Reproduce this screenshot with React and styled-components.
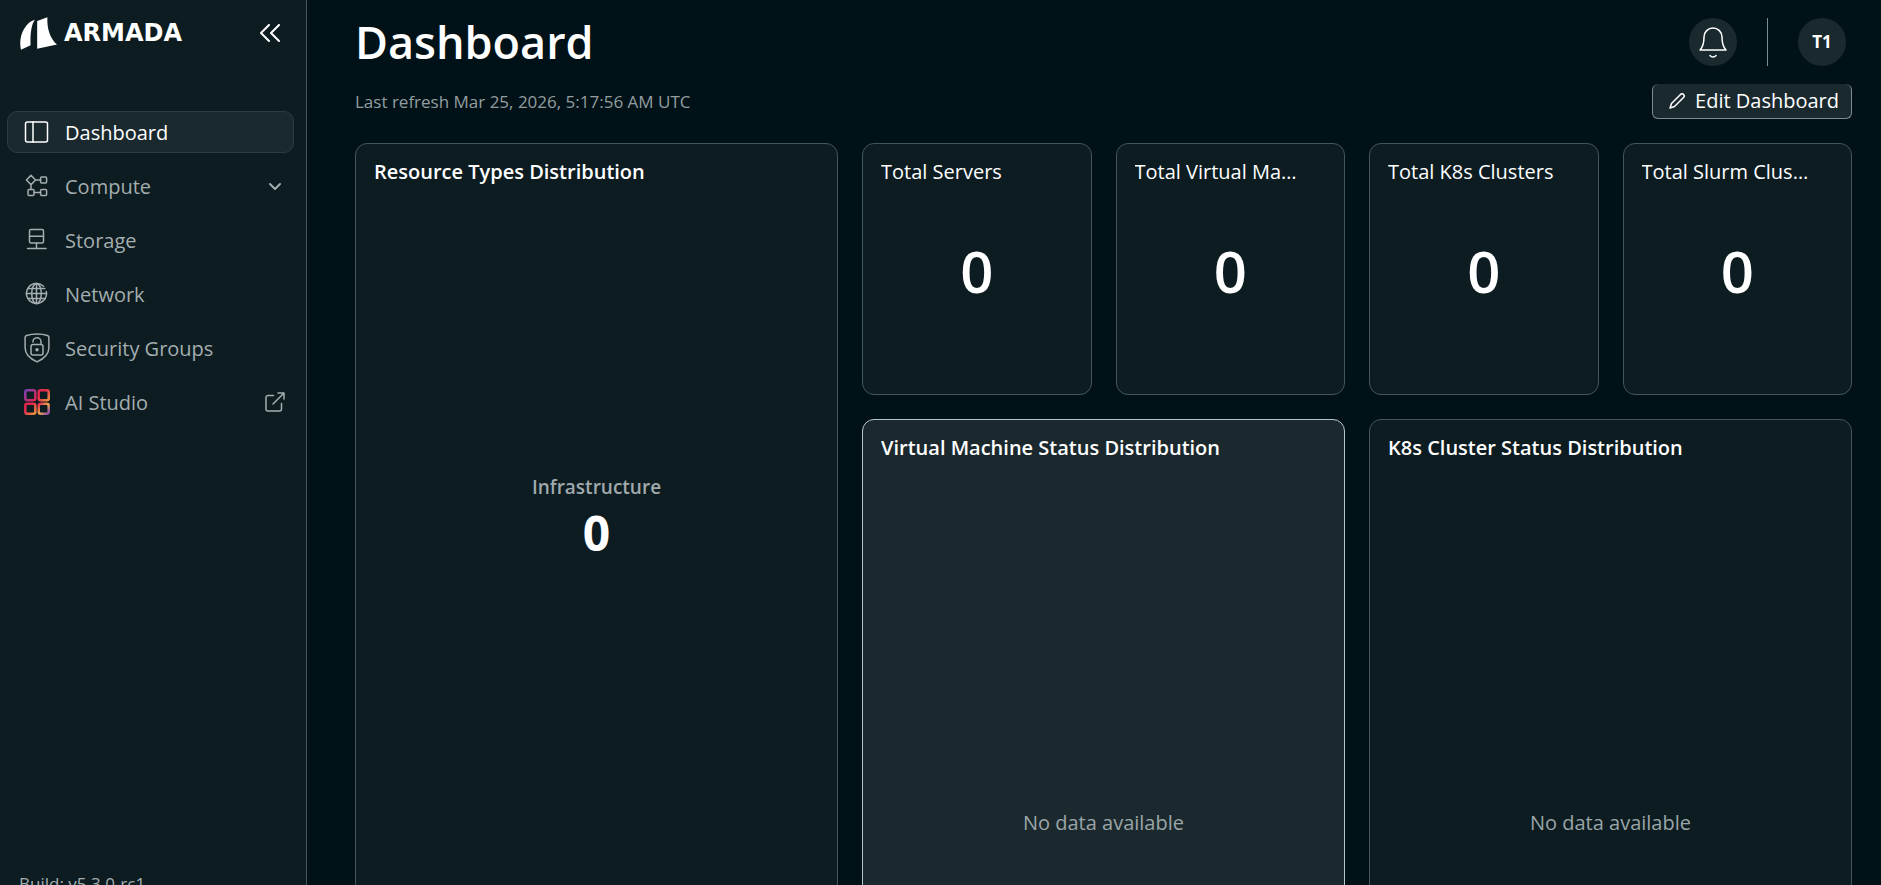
import styled, { createGlobalStyle, css } from 'styled-components';

const GlobalStyle = createGlobalStyle`
  * {
    box-sizing: border-box;
  }

  body {
    margin: 0;
    background-color: #001217;
    color: #ffffff;
    font-family: 'Open Sans', 'Noto Sans', sans-serif;
    font-size: 20px;
    line-height: 28px;
  }

  h1, h2, p, dl, dd, ul {
    margin: 0;
    padding: 0;
  }

  button {
    font: inherit;
    color: inherit;
    cursor: pointer;
  }
`;

const Layout = styled.div`
  display: grid;
  grid-template-columns: 307px minmax(0, 1fr);
  height: 100vh;
  overflow: hidden;
`;

// Sidebar
const Sidebar = styled.aside`
  display: flex;
  flex-direction: column;
  height: calc(100vh + 13px);
  padding: 16px 12px 0 7px;
  background-color: #0c1c21;
  border-right: 1px solid #43565b;
`;

const SidebarTop = styled.div`
  display: flex;
  align-items: center;
  justify-content: space-between;
  height: 34px;
  padding: 0 14px 0 13px;
  margin-bottom: 61px;
`;

const Brand = styled.a`
  display: flex;
  align-items: center;
  gap: 7px;
  color: #ffffff;
  text-decoration: none;
`;

const BrandName = styled.span`
  font-family: 'DejaVu Sans', sans-serif;
  font-size: 24px;
  font-weight: 700;
  line-height: 32px;
`;

const IconButton = styled.button`
  display: flex;
  padding: 0;
  border: 0;
  background: none;
`;

const NavList = styled.ul`
  display: flex;
  flex-direction: column;
  gap: 12px;
  list-style: none;
`;

const navItem = css`
  display: flex;
  align-items: center;
  gap: 15px;
  width: 100%;
  height: 42px;
  padding: 0 8px 0 16px;
  border: 1px solid ${({ $active }) => ($active ? '#2d3c41' : 'transparent')};
  border-radius: 10px;
  background-color: ${({ $active }) => ($active ? '#1a292e' : 'transparent')};
  color: ${({ $active }) => ($active ? '#ffffff' : '#a4adaf')};
  text-align: left;
  text-decoration: none;
`;

const NavLink = styled.a`
  ${navItem}
`;

const NavToggle = styled.button`
  ${navItem}
`;

const NavLabel = styled.span`
  flex: 1;
  padding-top: 2px;
`;

const Build = styled.p`
  margin-top: auto;
  padding-left: 12px;
  color: #a4adaf;
  font-size: 17px;
`;

// Main column
const Main = styled.main`
  padding: 0 29px 0 48px;
`;

const Header = styled.header`
  display: flex;
  align-items: center;
  justify-content: space-between;
  height: 84px;
  padding-right: 6px;
`;

const Title = styled.h1`
  font-size: 45px;
  font-weight: 600;
  line-height: 60px;
`;

const HeaderActions = styled.div`
  display: flex;
  align-items: center;
  gap: 30px;
`;

const RoundButton = styled.button`
  display: flex;
  align-items: center;
  justify-content: center;
  width: 48px;
  height: 48px;
  padding: 0;
  border: 0;
  border-radius: 50%;
  background-color: #1a292e;
  font-size: 17px;
  font-weight: 700;
`;

const Divider = styled.span`
  width: 1px;
  height: 48px;
  background-color: #7b8c90;
`;

const Toolbar = styled.div`
  display: flex;
  align-items: center;
  justify-content: space-between;
  margin-bottom: 24px;
`;

const Refresh = styled.p`
  color: #939da0;
  font-size: 17px;
`;

const EditButton = styled.button`
  display: flex;
  align-items: center;
  gap: 10px;
  height: 35px;
  padding: 0 12px 0 16px;
  border: 1px solid #7b8c90;
  border-top: 0;
  border-radius: 6px;
  background-color: #1a292e;
`;

const Grid = styled.div`
  display: grid;
  grid-template-columns: repeat(6, minmax(0, 1fr));
  grid-auto-rows: 252px;
  gap: 24px;
`;

const Card = styled.section`
  display: flex;
  flex-direction: column;
  grid-column: span ${({ $cols }) => $cols || 1};
  grid-row: span ${({ $rows }) => $rows || 1};
  padding: 14px 18px;
  border: 1px solid ${({ $hovered }) => ($hovered ? '#b4c6ca' : '#43565b')};
  border-radius: 12px;
  background-color: ${({ $hovered }) => ($hovered ? '#1b292e' : '#0c1c21')};
`;

const CardTitle = styled.h2`
  padding-right: 24px;
  overflow: hidden;
  font-size: 20px;
  font-weight: ${({ $strong }) => ($strong ? 600 : 400)};
  line-height: 28px;
  text-overflow: ellipsis;
  white-space: nowrap;
`;

const Count = styled.p`
  display: flex;
  flex: 1;
  align-items: center;
  justify-content: center;
  padding-bottom: 24px;
  font-size: 58px;
  font-weight: 600;
`;

const Summary = styled.dl`
  display: flex;
  flex: 1;
  flex-direction: column;
  align-items: center;
  justify-content: center;
  gap: 8px;
  padding-bottom: 88px;
`;

const SummaryLabel = styled.dt`
  color: #a0a9ac;
  font-size: 19px;
  font-weight: 600;
`;

const SummaryValue = styled.dd`
  font-size: 48px;
  font-weight: 700;
  line-height: 48px;
`;

const Empty = styled.p`
  display: flex;
  flex: 1;
  align-items: center;
  justify-content: center;
  padding-bottom: 24px;
  color: #9aa5a8;
`;

// Icons
const line = {
  fill: 'none',
  stroke: 'currentColor',
  strokeWidth: 1.5,
  strokeLinecap: 'round',
  strokeLinejoin: 'round',
  'aria-hidden': true,
};

const ArmadaMark = () => (
  <svg width="37" height="33" viewBox="60 48 112 99" fill="#ffffff" aria-hidden="true">
    <path d="M105 56C93 73 91 102 92 133L63 147C54 110 72 66 105 56Z" />
    <path d="M112 60L143 48C141 82 151 112 172 131L112 144Z" />
  </svg>
);

const CollapseIcon = () => (
  <svg width="20" height="18" viewBox="0 0 20 18" {...line} strokeWidth="2">
    <path d="M9 1L1 9l8 8M19 1l-8 8 8 8" />
  </svg>
);

const DashboardIcon = () => (
  <svg width="26" height="26" viewBox="0 0 26 26" {...line}>
    <rect x="1.5" y="3" width="22" height="20" rx="2" />
    <path d="M9 3v20" />
  </svg>
);

const ComputeIcon = () => (
  <svg width="26" height="26" viewBox="0 0 26 26" {...line}>
    <path d="M7 2.4L11.6 7 7 11.6 2.4 7zM11.6 7h5M7 11.6v5M10 19.6h6.6" />
    <rect x="16.6" y="4" width="6" height="6" rx="1" />
    <rect x="4" y="16.6" width="6" height="6" rx="1" />
    <rect x="16.6" y="16.6" width="6" height="6" rx="1" />
  </svg>
);

const StorageIcon = () => (
  <svg width="26" height="26" viewBox="0 0 26 26" {...line}>
    <rect x="5.5" y="2.5" width="14" height="13.5" rx="1.5" />
    <path d="M5.5 9.2h14M12.5 16v5M3.5 21.5h18.5" />
  </svg>
);

const NetworkIcon = () => (
  <svg width="26" height="26" viewBox="0 0 26 26" {...line}>
    <path d="M19.5 5.3A10 10 0 1 0 22.3 10.5" />
    <path d="M12.5 2.5v20M2.5 12.5h20M4.2 7.5h16.6M4.2 17.5h16.6" />
    <ellipse cx="12.5" cy="12.5" rx="4.8" ry="10" />
  </svg>
);

const SecurityIcon = () => (
  <svg width="26" height="30" viewBox="0 0 26 30" {...line}>
    <path d="M13 1c3.5 0 7.6.6 10.4 1.5 1 .3 1.5 1 1.5 2v10.2c0 6.6-5.5 11.2-11.9 14.2C6.600 25.9 1.100 21.300 1.100 14.700V4.500c0-1 .5-1.700 1.500-2C5.400 1.600 9.500 1 13 1z" />
    <rect x="7" y="11.5" width="12" height="10.5" rx="2" />
    <path d="M9 9a4 4 0 0 1 8-.5v3" />
    <circle cx="13" cy="16.8" r="1" fill="currentColor" />
  </svg>
);

const StudioIcon = () => (
  <svg width="26" height="26" viewBox="0 0 26 26" fill="none" strokeWidth="2.5" aria-hidden="true">
    <defs>
      <linearGradient id="studio-a" x1="0" y1="0" x2="1" y2="1">
        <stop offset="0" stopColor="#7a3fb4" />
        <stop offset="1" stopColor="#e0264f" />
      </linearGradient>
      <linearGradient id="studio-b" x1="0" y1="0" x2="1" y2="1">
        <stop offset="0.3" stopColor="#e3264e" />
        <stop offset="1" stopColor="#f0913f" />
      </linearGradient>
      <linearGradient id="studio-c" x1="0" y1="0" x2="1" y2="1">
        <stop offset="0" stopColor="#e3264e" />
        <stop offset="0.5" stopColor="#f2a54a" />
        <stop offset="1" stopColor="#8a45b0" />
      </linearGradient>
    </defs>
    <rect x="1.3" y="1.3" width="10" height="10" rx="2" stroke="url(#studio-a)" />
    <rect x="14.7" y="1.3" width="10" height="10" rx="2" stroke="url(#studio-b)" />
    <rect x="1.3" y="14.7" width="10" height="10" rx="2" stroke="url(#studio-b)" />
    <rect x="14.7" y="14.7" width="10" height="10" rx="2" stroke="url(#studio-c)" />
  </svg>
);

const ChevronIcon = () => (
  <svg width="20" height="20" viewBox="0 0 20 20" {...line} strokeWidth="2">
    <path d="M5 8l5 5 5-5" />
  </svg>
);

const ExternalIcon = () => (
  <svg width="20" height="20" viewBox="0 0 20 20" {...line}>
    <path d="M8.5 3.5H3a2 2 0 0 0-2 2V17a2 2 0 0 0 2 2h11.5a2 2 0 0 0 2-2v-5.5M13 1h6v6M19 1L8 12" />
  </svg>
);

const BellIcon = () => (
  <svg width="28" height="32" viewBox="0 0 28 32" {...line}>
    <path d="M1 24c3-3 4-6 4-13a9 9 0 0 1 18 0c0 7 1 10 4 13z" />
    <path d="M11 29.5c1.5 2 4.5 2 6 0" />
  </svg>
);

const PencilIcon = () => (
  <svg width="16" height="16" viewBox="0 0 16 16" {...line}>
    <path d="M11.5 1.5a2 2 0 0 1 3 3L5.5 13.5 1 15l1.5-4.5z" />
  </svg>
);

const navItems = [
  { label: 'Dashboard', icon: DashboardIcon, active: true },
  { label: 'Compute', icon: ComputeIcon, expandable: true },
  { label: 'Storage', icon: StorageIcon },
  { label: 'Network', icon: NetworkIcon },
  { label: 'Security Groups', icon: SecurityIcon },
  { label: 'AI Studio', icon: StudioIcon, external: true },
];

const totals = [
  { title: 'Total Servers', value: 0 },
  { title: 'Total Virtual Machines', value: 0 },
  { title: 'Total K8s Clusters', value: 0 },
  { title: 'Total Slurm Clusters', value: 0 },
];

const NavItem = ({ label, icon: Icon, active, expandable, external }) => {
  if (expandable) {
    return (
      <NavToggle type="button" aria-expanded="false">
        <Icon />
        <NavLabel>{label}</NavLabel>
        <ChevronIcon />
      </NavToggle>
    );
  }

  return (
    <NavLink href="#" $active={active} aria-current={active ? 'page' : undefined}>
      <Icon />
      <NavLabel>{label}</NavLabel>
      {external && <ExternalIcon />}
    </NavLink>
  );
};

export default function App() {
  return (
    <>
      <GlobalStyle />
      <Layout>
        <Sidebar>
          <SidebarTop>
            <Brand href="#">
              <ArmadaMark />
              <BrandName>ARMADA</BrandName>
            </Brand>
            <IconButton type="button" aria-label="Collapse sidebar">
              <CollapseIcon />
            </IconButton>
          </SidebarTop>
          <nav>
            <NavList>
              {navItems.map((item) => (
                <li key={item.label}>
                  <NavItem {...item} />
                </li>
              ))}
            </NavList>
          </nav>
          <Build>Build: v5.3.0-rc1</Build>
        </Sidebar>

        <Main>
          <Header>
            <Title>Dashboard</Title>
            <HeaderActions>
              <RoundButton type="button" aria-label="Notifications">
                <BellIcon />
              </RoundButton>
              <Divider />
              <RoundButton type="button">T1</RoundButton>
            </HeaderActions>
          </Header>

          <Toolbar>
            <Refresh>Last refresh Mar 25, 2026, 5:17:56 AM UTC</Refresh>
            <EditButton type="button">
              <PencilIcon />
              Edit Dashboard
            </EditButton>
          </Toolbar>

          <Grid>
            <Card $cols={2} $rows={3}>
              <CardTitle $strong>Resource Types Distribution</CardTitle>
              <Summary>
                <SummaryLabel>Infrastructure</SummaryLabel>
                <SummaryValue>0</SummaryValue>
              </Summary>
            </Card>
            {totals.map(({ title, value }) => (
              <Card key={title}>
                <CardTitle>{title}</CardTitle>
                <Count>{value}</Count>
              </Card>
            ))}
            <Card $cols={2} $rows={3} $hovered>
              <CardTitle $strong>Virtual Machine Status Distribution</CardTitle>
              <Empty>No data available</Empty>
            </Card>
            <Card $cols={2} $rows={3}>
              <CardTitle $strong>K8s Cluster Status Distribution</CardTitle>
              <Empty>No data available</Empty>
            </Card>
          </Grid>
        </Main>
      </Layout>
    </>
  );
}
